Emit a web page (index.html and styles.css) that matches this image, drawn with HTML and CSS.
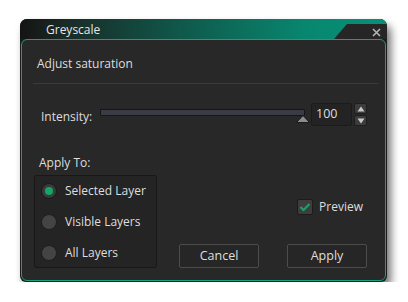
FILE: index.html
```html
<!DOCTYPE html>
<html>
<head>
<meta charset="utf-8">
<link rel="stylesheet" href="styles.css">
</head>
<body>
<div class="window">
  <div class="titlebar">
    <span class="title">Greyscale</span>
    <div class="close-tab">
      <svg class="close-x" width="9" height="9" viewBox="0 0 9 9"><path d="M1 1 L8 8 M8 1 L1 8" stroke="#b4b4b4" stroke-width="1.6" fill="none"/></svg>
    </div>
  </div>
  <div class="panel">
    <div class="heading">Adjust saturation</div>
    <div class="sep"></div>
    <div class="intensity-row">
      <span class="label intensity-label">Intensity:</span>
      <div class="slider">
        <div class="track"></div>
        <svg class="thumb" width="14" height="8" viewBox="0 0 14 8"><path d="M7 0.5 L13.5 7.5 L0.5 7.5 Z" fill="#8c8c8c" stroke="#1a1a1a" stroke-width="1"/></svg>
      </div>
      <div class="spinbox">100</div>
      <div class="spin-btns">
        <div class="spin-btn"><svg width="8" height="6" viewBox="0 0 8 6"><path d="M4 0.5 L7.5 5.5 L0.5 5.5 Z" fill="#c8c8c8"/></svg></div>
        <div class="spin-btn"><svg width="8" height="6" viewBox="0 0 8 6"><path d="M0.5 0.5 L7.5 0.5 L4 5.5 Z" fill="#c8c8c8"/></svg></div>
      </div>
    </div>
    <div class="label apply-label">Apply To:</div>
    <div class="bottom">
      <div class="radio-group">
        <div class="radio-row"><span class="radio checked"></span><span class="label">Selected Layer</span></div>
        <div class="radio-row"><span class="radio"></span><span class="label">Visible Layers</span></div>
        <div class="radio-row"><span class="radio"></span><span class="label">All Layers</span></div>
      </div>
      <div class="right">
        <div class="preview">
          <span class="checkbox"><svg width="12" height="10" viewBox="0 0 12 10"><path d="M1.5 5 L4.5 8 L10.5 2" stroke="#16a465" stroke-width="2.2" fill="none"/></svg></span>
          <span class="label">Preview</span>
        </div>
        <div class="buttons">
          <div class="btn">Cancel</div>
          <div class="btn">Apply</div>
        </div>
      </div>
    </div>
  </div>
</div>
</body>
</html>
```

FILE: styles.css
```css
html, body {
  margin: 0;
  padding: 0;
  background: #ffffff;
}
body {
  padding: 19px 0 0 20px;
  font-family: "Open Sans", "Noto Sans", sans-serif;
  font-size: 12px;
  color: #dedede;
}
.window {
  width: 367px;
  height: 263px;
  border-radius: 7px 7px 6px 6px;
  background: #1c1c1c;
  box-shadow: 4px 6px 8px rgba(0,0,0,0.55);
  display: flex;
  flex-direction: column;
  overflow: hidden;
}
.titlebar {
  height: 20px;
  flex: none;
  display: flex;
  align-items: flex-end;
  background: linear-gradient(90deg, #141414 0%, #1a2a26 12%, #0f5a4c 45%, #08876f 78%, #079078 100%);
}
.title {
  flex: 1;
  padding-left: 26px;
  align-self: center;
  font-size: 12px;
  line-height: 16px;
  color: #e6e6e6;
  margin-top: 1px;
}
.close-tab {
  width: 53px;
  height: 15px;
  background: #262626;
  clip-path: polygon(13px 0, 100% 0, 100% 100%, 0 100%);
  display: flex;
  align-items: center;
  justify-content: flex-end;
  padding-right: 6px;
  box-sizing: border-box;
}
.close-x { display: block; margin-top: 1px; }
.panel {
  flex: 1;
  margin: 0 1px 1px 1px;
  border: 1px solid #14a27a;
  border-radius: 6px;
  background: #282828;
  display: flex;
  flex-direction: column;
}
.heading {
  padding: 16px 0 0 15px;
  line-height: 16px;
  font-size: 12px;
}
.sep {
  height: 1px;
  background: #3b3b3b;
  margin: 11px 7px 0 11px;
}
.label { line-height: 16px; }
.intensity-row {
  display: flex;
  align-items: flex-start;
  margin-top: 19px;
  padding-left: 19px;
}
.intensity-label { margin-top: 6px; width: 59px; }
.slider {
  position: relative;
  width: 205px;
  height: 23px;
}
.track {
  margin-top: 6px;
  height: 7px;
  box-sizing: border-box;
  border: 1px solid #161616;
  background: #3a3c44;
  border-radius: 1px;
}
.thumb {
  position: absolute;
  left: 196px;
  top: 12px;
  display: block;
}
.spinbox {
  width: 41px;
  height: 23px;
  box-sizing: border-box;
  border: 1px solid #1b1b1b;
  border-radius: 2px;
  background: #232323;
  padding-left: 4px;
  line-height: 20px;
  font-size: 12.5px;
  margin-left: 6px;
}
.spin-btns {
  display: flex;
  flex-direction: column;
  gap: 1px;
  margin-left: 2px;
}
.spin-btn {
  width: 13px;
  height: 11px;
  box-sizing: border-box;
  background: #3c3c3c;
  border: 1px solid #1e1e1e;
  border-radius: 2px;
  display: flex;
  align-items: center;
  justify-content: center;
}
.spin-btn svg { display: block; }
.apply-label {
  margin: 29px 0 0 17px;
}
.bottom {
  display: flex;
  margin-top: 4px;
  padding-left: 12px;
}
.radio-group {
  width: 123px;
  height: 93px;
  box-sizing: border-box;
  border: 1px solid #181818;
  border-radius: 2px;
  background: #242424;
  display: flex;
  flex-direction: column;
  padding: 7px 0 0 6px;
  gap: 15px;
}
.radio-row {
  display: flex;
  align-items: center;
  gap: 8px;
  height: 16px;
}
.radio {
  width: 16px;
  height: 16px;
  box-sizing: border-box;
  border-radius: 50%;
  background: #444444;
  border: 1px solid #1e1e1e;
  display: flex;
  align-items: center;
  justify-content: center;
}
.radio.checked {
  background: #3a3a3a;
  border: 1px solid #1a1a1a;
}
.radio.checked::after {
  content: "";
  width: 8px;
  height: 8px;
  border-radius: 50%;
  background: #13a766;
}
.right {
  flex: 1;
  display: flex;
  flex-direction: column;
  align-items: flex-end;
  padding-right: 18px;
}
.preview {
  display: flex;
  align-items: center;
  gap: 6px;
  margin-top: 24px;
  margin-right: 4px;
}
.checkbox {
  width: 16px;
  height: 16px;
  box-sizing: border-box;
  background: #3d3d3d;
  border: 1px solid #1c1c1c;
  border-radius: 2px;
  display: flex;
  align-items: center;
  justify-content: center;
}
.checkbox svg { display: block; }
.buttons {
  display: flex;
  gap: 28px;
  margin-top: 29px;
}
.btn {
  width: 80px;
  height: 24px;
  box-sizing: border-box;
  border: 1px solid #4c4c4c;
  border-radius: 2px;
  background: #262626;
  text-align: center;
  line-height: 22px;
  font-size: 12.5px;
}
```
